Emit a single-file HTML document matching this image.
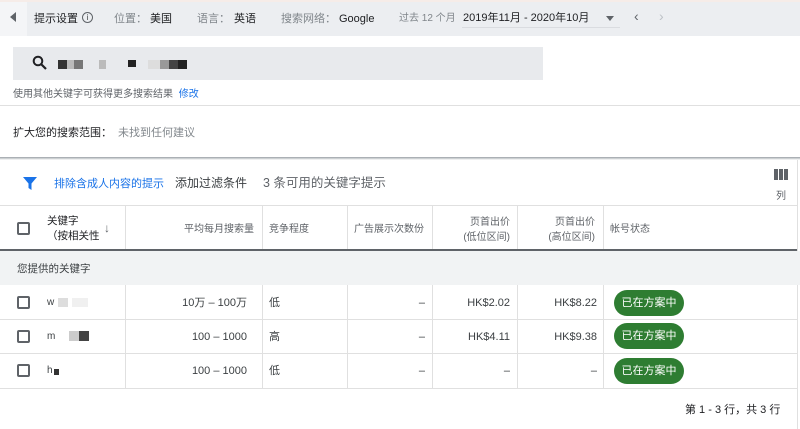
<!DOCTYPE html>
<html><head><meta charset="utf-8"><style>
*{box-sizing:border-box;margin:0;padding:0}
body{width:800px;height:429px;overflow:hidden;background:#fff;font-family:"Liberation Sans","Noto Sans CJK SC",sans-serif;color:#3c4043;position:relative;font-size:11px;line-height:14px}
.a{position:absolute;white-space:nowrap}
.top{position:absolute;left:0;top:0;width:800px;height:36px;background:#eceef1;border-top:2px solid #f6ece8}
.vl{position:absolute;top:0;width:1px;background:#e0e0e0}
.hl{position:absolute;left:0;width:797px;height:1px;background:#e0e0e0}
.cb{position:absolute;left:17px;width:13px;height:13px;border:2px solid #5f6368;border-radius:2px}
.pill{position:absolute;left:614px;width:70px;height:26px;border-radius:13px;background:#2e7d32;color:#fff;font-size:11px;line-height:26px;text-align:center}
.r{text-align:right}
</style></head><body>
<div class="top"></div>
<div class="a" style="left:0;top:2px;width:27px;height:34px;background:#f4f5f7"></div>
<div class="a" style="left:10px;top:12px;width:0;height:0;border-top:5px solid transparent;border-bottom:5px solid transparent;border-right:6px solid #5f6368"></div>
<div class="a" style="left:34px;top:12px;font-size:11px;color:#202124">提示设置</div>
<div class="a" style="left:82px;top:12px;width:11px;height:11px;border:1px solid #5f6368;border-radius:50%;font-size:8px;line-height:9px;text-align:center">i</div>
<div class="a" style="left:114px;top:12px;color:#80868b">位置：</div>
<div class="a" style="left:150px;top:12px;color:#202124">美国</div>
<div class="a" style="left:197px;top:12px;color:#80868b">语言：</div>
<div class="a" style="left:234px;top:12px;color:#202124">英语</div>
<div class="a" style="left:281px;top:12px;color:#80868b">搜索网络：</div>
<div class="a" style="left:339px;top:12px;color:#202124">Google</div>
<div class="a" style="left:399px;top:12px;color:#80868b;font-size:10px">过去 12 个月</div>
<div class="a" style="left:463px;top:11px;color:#202124;font-size:11px">2019年11月 - 2020年10月</div>
<div class="a" style="left:462px;top:27px;width:158px;height:1px;background:#dadce0"></div>
<div class="a" style="left:606px;top:16px;border-left:4px solid transparent;border-right:4px solid transparent;border-top:5px solid #5f6368"></div>
<div class="a" style="left:634px;top:9px;font-size:14px;color:#5f6368">‹</div>
<div class="a" style="left:659px;top:9px;font-size:14px;color:#bdc1c6">›</div>

<div class="a" style="left:13px;top:47px;width:530px;height:33px;background:#e8eaed"></div>
<svg class="a" style="left:32px;top:55px" width="16" height="16" viewBox="0 0 16 16"><circle cx="6" cy="6" r="4.3" fill="none" stroke="#202124" stroke-width="2"/><path d="M9 9l5 5" stroke="#202124" stroke-width="2.2"/></svg>
<div class="a" style="left:58px;top:60px;width:9px;height:9px;background:#333"></div>
<div class="a" style="left:67px;top:60px;width:7px;height:9px;background:#bbb"></div>
<div class="a" style="left:74px;top:60px;width:9px;height:9px;background:#777"></div>
<div class="a" style="left:99px;top:60px;width:7px;height:9px;background:#bbb"></div>
<div class="a" style="left:128px;top:60px;width:8px;height:7px;background:#222"></div>
<div class="a" style="left:148px;top:60px;width:12px;height:9px;background:#ddd"></div>
<div class="a" style="left:160px;top:60px;width:9px;height:9px;background:#999"></div>
<div class="a" style="left:169px;top:60px;width:9px;height:9px;background:#444"></div>
<div class="a" style="left:178px;top:60px;width:9px;height:9px;background:#222"></div>
<div class="a" style="left:13px;top:88px;font-size:10px;color:#5f6368">使用其他关键字可获得更多搜索结果 <span style="color:#1a73e8;margin-left:3px">修改</span></div>
<div class="a" style="left:0;top:105px;width:800px;height:1px;background:#e0e0e0"></div>
<div class="a" style="left:13px;top:126px;font-size:11px;color:#202124">扩大您的搜索范围：</div>
<div class="a" style="left:118px;top:126px;font-size:11px;color:#80868b">未找到任何建议</div>
<div class="a" style="left:0;top:157px;width:800px;height:3px;background:linear-gradient(#9aa0a6,#fff)"></div>
<div class="a" style="left:797px;top:160px;width:1px;height:269px;background:#e0e0e0"></div>

<svg class="a" style="left:23px;top:177px" width="14" height="13" viewBox="0 0 14 13"><path d="M0 0h14L8.5 6.5V13l-3-2V6.5z" fill="#1a73e8"/></svg>
<div class="a" style="left:54px;top:177px;color:#1a73e8">排除含成人内容的提示</div>
<div class="a" style="left:175px;top:176px;font-size:12px;color:#3c4043">添加过滤条件</div>
<div class="a" style="left:263px;top:176px;font-size:12.5px;color:#5f6368">3 条可用的关键字提示</div>
<div class="a" style="left:774px;top:169px;width:14px;height:11px;background:linear-gradient(90deg,#5f6368 0 4px,#fff 4px 5px,#5f6368 5px 9px,#fff 9px 10px,#5f6368 10px)"></div>
<div class="a" style="left:776px;top:190px;font-size:10px;color:#5f6368">列</div>

<div class="hl" style="top:205px"></div>
<div class="vl" style="left:125px;top:205px;height:183px"></div>
<div class="vl" style="left:262px;top:205px;height:183px"></div>
<div class="vl" style="left:347px;top:205px;height:183px"></div>
<div class="vl" style="left:432px;top:205px;height:183px"></div>
<div class="vl" style="left:517px;top:205px;height:183px"></div>
<div class="vl" style="left:603px;top:205px;height:183px"></div>
<div class="cb" style="top:222px"></div>
<div class="a" style="left:47px;top:214px;color:#202124;font-size:10.5px">关键字</div>
<div class="a" style="left:47px;top:229px;color:#202124;font-size:10.5px">（按相关性</div>
<div class="a" style="left:104px;top:221px;color:#5f6368;font-size:12px">↓</div>
<div class="a r" style="left:125px;top:223px;width:129px;color:#5f6368;font-size:10px">平均每月搜索量</div>
<div class="a" style="left:269px;top:223px;color:#5f6368;font-size:10px">竞争程度</div>
<div class="a" style="left:354px;top:223px;color:#5f6368;font-size:10px">广告展示次数份</div>
<div class="a r" style="left:432px;top:215px;width:78px;color:#5f6368;font-size:10px;line-height:15px">页首出价<br>(低位区间)</div>
<div class="a r" style="left:517px;top:215px;width:78px;color:#5f6368;font-size:10px;line-height:15px">页首出价<br>(高位区间)</div>
<div class="a" style="left:610px;top:223px;color:#5f6368;font-size:10px">帐号状态</div>
<div class="a" style="left:0;top:249px;width:797px;height:2px;background:#5f6368"></div>
<div class="a" style="left:0;top:251px;width:800px;height:34px;background:#f1f3f4"></div>
<div class="a" style="left:17px;top:262px;color:#3c4043;font-size:10.5px">您提供的关键字</div>
<div class="hl" style="top:319px"></div>
<div class="hl" style="top:353px"></div>
<div class="hl" style="top:388px"></div>

<div class="cb" style="top:296px"></div>
<div class="cb" style="top:330px"></div>
<div class="cb" style="top:364px"></div>
<div class="a" style="left:47px;top:296px;font-size:10px">w</div>
<div class="a" style="left:58px;top:298px;width:10px;height:9px;background:#ddd"></div>
<div class="a" style="left:72px;top:298px;width:16px;height:9px;background:#f0f0f0"></div>
<div class="a" style="left:47px;top:330px;font-size:10px">m</div>
<div class="a" style="left:69px;top:331px;width:10px;height:10px;background:#ccc"></div>
<div class="a" style="left:79px;top:331px;width:10px;height:10px;background:#444"></div>
<div class="a" style="left:47px;top:364px;font-size:10px">h</div>
<div class="a" style="left:54px;top:369px;width:5px;height:6px;background:#333"></div>

<div class="a r" style="left:125px;top:296px;width:122px">10万 – 100万</div>
<div class="a r" style="left:125px;top:330px;width:122px">100 – 1000</div>
<div class="a r" style="left:125px;top:364px;width:122px">100 – 1000</div>
<div class="a" style="left:269px;top:296px">低</div>
<div class="a" style="left:269px;top:330px">高</div>
<div class="a" style="left:269px;top:364px">低</div>
<div class="a r" style="left:347px;top:296px;width:78px">–</div>
<div class="a r" style="left:347px;top:330px;width:78px">–</div>
<div class="a r" style="left:347px;top:364px;width:78px">–</div>
<div class="a r" style="left:432px;top:296px;width:78px">HK$2.02</div>
<div class="a r" style="left:432px;top:330px;width:78px">HK$4.11</div>
<div class="a r" style="left:432px;top:364px;width:78px">–</div>
<div class="a r" style="left:517px;top:296px;width:80px">HK$8.22</div>
<div class="a r" style="left:517px;top:330px;width:80px">HK$9.38</div>
<div class="a r" style="left:517px;top:364px;width:80px">–</div>
<div class="pill" style="top:290px">已在方案中</div>
<div class="pill" style="top:323px">已在方案中</div>
<div class="pill" style="top:358px">已在方案中</div>
<div class="a" style="left:685px;top:403px;color:#202124">第 1 - 3 行，共 3 行</div>
</body></html>
